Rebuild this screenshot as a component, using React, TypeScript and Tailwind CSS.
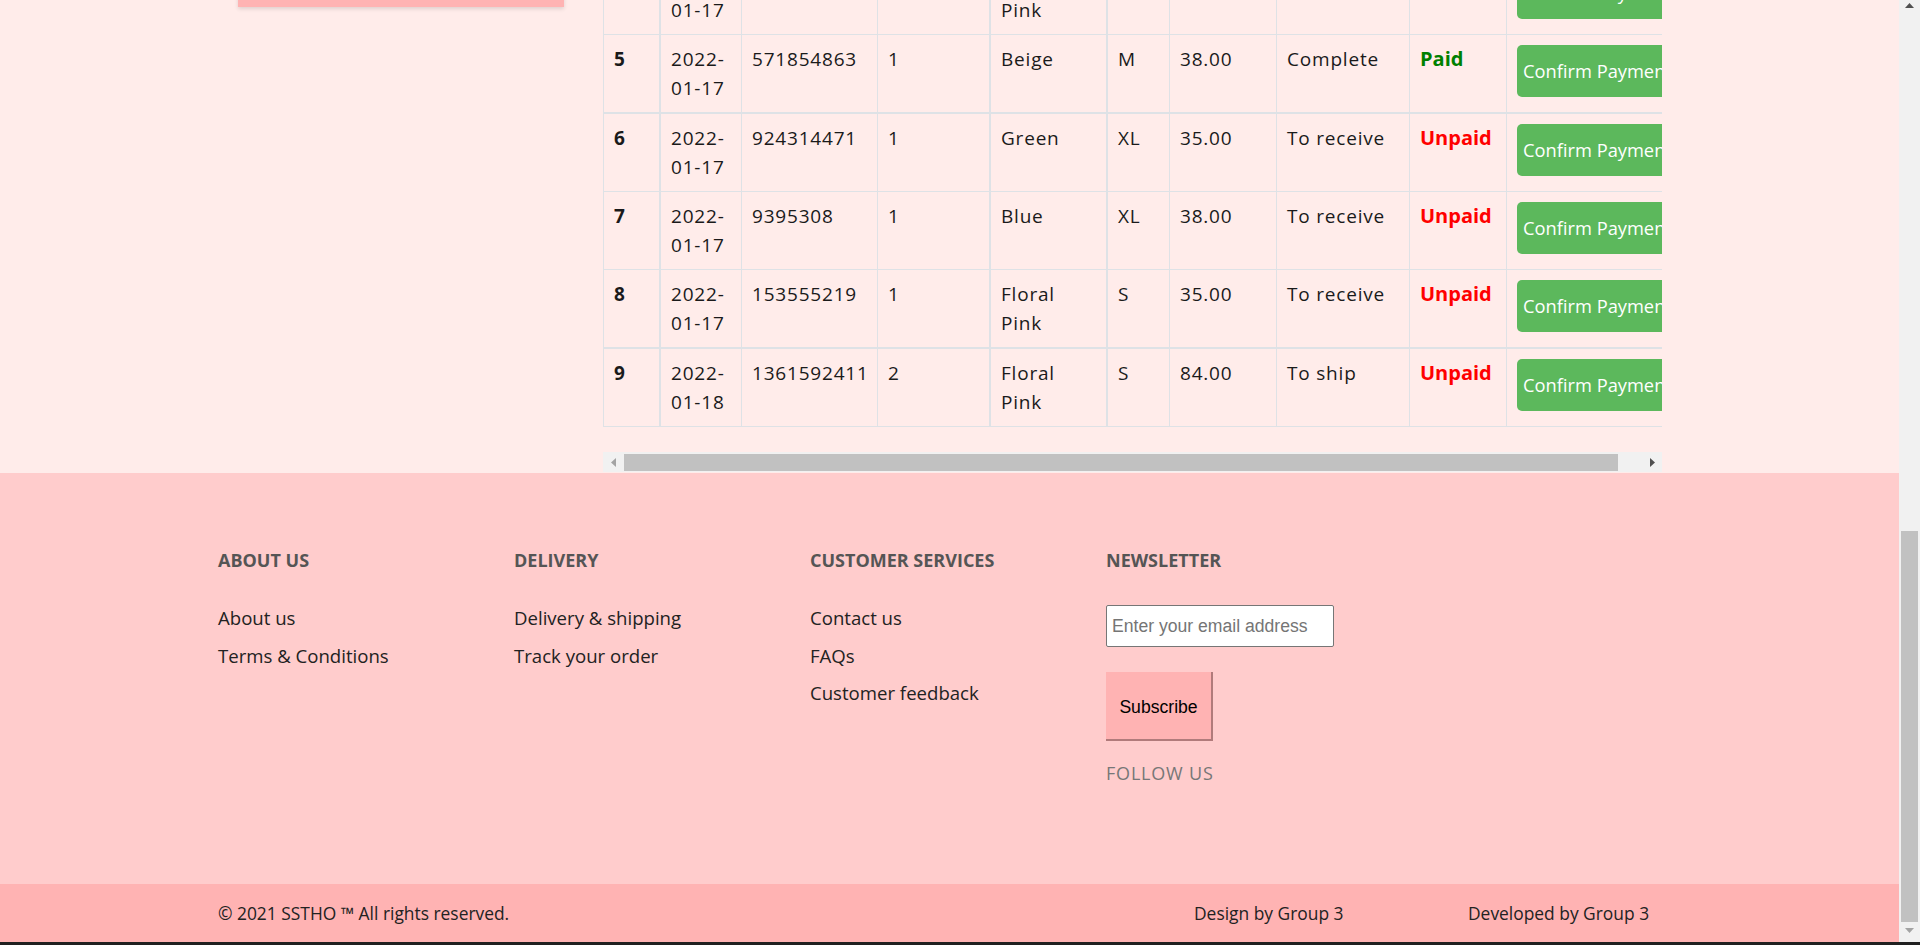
import React from "react";

type Order = {
  id: number;
  date: string;
  orderNo: string;
  qty: number;
  colour: string;
  size: string;
  total: string;
  status: string;
  paid: boolean;
  thick?: boolean;
};

const orders: Order[] = [
  { id: 1, date: "2022-01-16", orderNo: "1208447723", qty: 1, colour: "Beige", size: "S", total: "38.00", status: "Complete", paid: true },
  { id: 2, date: "2022-01-16", orderNo: "716529044", qty: 2, colour: "Blue", size: "M", total: "76.00", status: "Complete", paid: true },
  { id: 3, date: "2022-01-17", orderNo: "482615903", qty: 1, colour: "Green", size: "L", total: "35.00", status: "Complete", paid: true },
  { id: 4, date: "2022-01-17", orderNo: "330871562", qty: 1, colour: "Floral Pink", size: "M", total: "35.00", status: "Complete", paid: true },
  { id: 5, date: "2022-01-17", orderNo: "571854863", qty: 1, colour: "Beige", size: "M", total: "38.00", status: "Complete", paid: true },
  { id: 6, date: "2022-01-17", orderNo: "924314471", qty: 1, colour: "Green", size: "XL", total: "35.00", status: "To receive", paid: false, thick: true },
  { id: 7, date: "2022-01-17", orderNo: "9395308", qty: 1, colour: "Blue", size: "XL", total: "38.00", status: "To receive", paid: false },
  { id: 8, date: "2022-01-17", orderNo: "153555219", qty: 1, colour: "Floral Pink", size: "S", total: "35.00", status: "To receive", paid: false },
  { id: 9, date: "2022-01-18", orderNo: "1361592411", qty: 2, colour: "Floral Pink", size: "S", total: "84.00", status: "To ship", paid: false, thick: true },
];

const headers = ["#", "Date", "Order No.", "Quantity", "Colour", "Size", "Total", "Status", "Payment", "Action"];
const colWidths = [56, 82, 136, 112, 117, 63, 107, 133, 97, 187];
// columns that get the heavier rule on their left side
const thickCols = [1, 4, 5];

const sideMenu = ["My Profile", "My Orders", "Change Password", "Address Book", "Log Out"];

const cellClass = (col: number, thickRow: boolean, last: boolean) =>
  [
    "border-[#dee2e6] px-[10px] pt-[10px] pb-[10px] align-top",
    thickCols.includes(col) ? "border-l-2" : "border-l",
    thickRow ? "border-t-2" : "border-t",
    last ? "border-b" : "",
  ].join(" ");

const UpArrow = ({ color }: { color: string }) => (
  <svg width="9" height="5" viewBox="0 0 9 5">
    <path d="M4.5 0L9 5H0z" fill={color} />
  </svg>
);

const DownArrow = ({ color }: { color: string }) => (
  <svg width="9" height="5" viewBox="0 0 9 5">
    <path d="M0 0h9L4.5 5z" fill={color} />
  </svg>
);

const LeftArrow = ({ color }: { color: string }) => (
  <svg width="5" height="9" viewBox="0 0 5 9">
    <path d="M5 0v9L0 4.5z" fill={color} />
  </svg>
);

const RightArrow = ({ color }: { color: string }) => (
  <svg width="5" height="9" viewBox="0 0 5 9">
    <path d="M0 0l5 4.5L0 9z" fill={color} />
  </svg>
);

const OrdersTable = () => (
  <div className="w-[1059px] overflow-hidden pb-[25px]">
    <table className="w-[1090px] table-fixed border-separate border-spacing-0 text-[19px] leading-[28.5px] tracking-[0.8px] text-[#1a1a1a]">
      <colgroup>
        {colWidths.map((w, i) => (
          <col key={i} style={{ width: w }} />
        ))}
      </colgroup>
      <thead>
        <tr>
          {headers.map((h, i) => (
            <th key={h} className={cellClass(i, false, false) + " text-left font-bold whitespace-nowrap"}>
              {h}
            </th>
          ))}
        </tr>
      </thead>
      <tbody>
        {orders.map((o, idx) => {
          const last = idx === orders.length - 1;
          const t = !!o.thick;
          return (
            <tr key={o.id}>
              <th scope="row" className={cellClass(0, t, last) + " text-left font-bold"}>
                {o.id}
              </th>
              <td className={cellClass(1, t, last)}>{o.date}</td>
              <td className={cellClass(2, t, last)}>{o.orderNo}</td>
              <td className={cellClass(3, t, last)}>{o.qty}</td>
              <td className={cellClass(4, t, last)}>{o.colour}</td>
              <td className={cellClass(5, t, last)}>{o.size}</td>
              <td className={cellClass(6, t, last)}>{o.total}</td>
              <td className={cellClass(7, t, last)}>{o.status}</td>
              <td className={cellClass(8, t, last)}>
                {o.paid ? (
                  <span className="text-[20px] font-bold tracking-normal text-[#008000]">Paid</span>
                ) : (
                  <span className="text-[20px] font-bold tracking-normal text-[#ff0000]">Unpaid</span>
                )}
              </td>
              <td className={cellClass(9, t, last)}>
                <button className="whitespace-nowrap rounded-[5px] bg-[#5cb85c] px-[6px] py-[13px] text-[18.3px] leading-[26px] tracking-normal text-white">
                  Confirm Payment
                </button>
              </td>
            </tr>
          );
        })}
      </tbody>
    </table>
  </div>
);

const HScrollbar = () => (
  <div className="flex h-[20px] w-[1059px] bg-[#f1f1f1]">
    <div className="flex w-[20px] items-center justify-center">
      <LeftArrow color="#a3a3a3" />
    </div>
    <div className="mt-[2px] mb-[1px] ml-[1px] w-[994px] bg-[#c1c1c1]" />
    <div className="flex-1" />
    <div className="flex w-[20px] items-center justify-center">
      <RightArrow color="#505050" />
    </div>
  </div>
);

const VScrollbar = () => (
  <div className="flex w-[21px] shrink-0 flex-col bg-[#f1f1f1]">
    <div className="flex h-[17px] justify-center pt-[3px]">
      <UpArrow color="#505050" />
    </div>
    <div className="flex-1" />
    <div className="mx-[2px] h-[391px] bg-[#c1c1c1]" />
    <div className="flex h-[20px] justify-center pt-[6px]">
      <DownArrow color="#a3a3a3" />
    </div>
  </div>
);

const FooterColumn = ({ title, links }: { title: string; links: string[] }) => (
  <div className="w-[296px]">
    <h4 className="text-[18px] leading-[24px] font-bold text-[#555555]">{title}</h4>
    <ul className="mt-[32px] flex flex-col gap-[9.5px]">
      {links.map((l) => (
        <li key={l} className="text-[18.6px] leading-[28px] text-[#222222]">
          {l}
        </li>
      ))}
    </ul>
  </div>
);

export default function App() {
  return (
    <div className="flex h-[945px] flex-col overflow-hidden bg-[#202020] font-['Open_Sans','Noto_Sans',sans-serif]">
      <div className="flex min-h-0 flex-1">
        <div className="flex min-w-0 flex-1 flex-col justify-end overflow-hidden bg-[#ffecea]">
          <main className="flex shrink-0 items-start pt-[40px] pb-[1px] pl-[218px]">
            <aside className="w-[385px] shrink-0 pl-[20px]">
              <nav className="flex w-[326px] flex-col gap-[6px]">
                {sideMenu.map((m) => (
                  <div
                    key={m}
                    className="flex h-[62px] items-center justify-center bg-[#ffb3b3] text-[18px] text-[#222222] shadow-[0_2px_4px_rgba(0,0,0,0.12)]"
                  >
                    {m}
                  </div>
                ))}
              </nav>
            </aside>
            <section className="shrink-0">
              <OrdersTable />
              <HScrollbar />
            </section>
          </main>

          <footer className="shrink-0">
            <div className="flex h-[411px] bg-[#ffcccc] pt-[75px] pl-[218px]">
              <FooterColumn title="ABOUT US" links={["About us", "Terms & Conditions"]} />
              <FooterColumn title="DELIVERY" links={["Delivery & shipping", "Track your order"]} />
              <FooterColumn title="CUSTOMER SERVICES" links={["Contact us", "FAQs", "Customer feedback"]} />
              <div className="w-[296px]">
                <h4 className="text-[18px] leading-[24px] font-bold text-[#555555]">NEWSLETTER</h4>
                <input
                  type="email"
                  placeholder="Enter your email address"
                  className="mt-[33px] block h-[42px] w-[228px] rounded-[2px] border border-[#767676] bg-white px-[5px] font-['Liberation_Sans',Arial,sans-serif] text-[17.6px] placeholder:text-[#757575]"
                />
                <button className="mt-[25px] block h-[69px] w-[107px] border-r-2 border-b-2 border-[#b17b7b] bg-[#ffb3b3] pt-[4px] font-['Liberation_Sans',Arial,sans-serif] text-[17.6px] text-black">
                  Subscribe
                </button>
                <p className="mt-[20px] text-[18px] leading-[24px] tracking-[0.8px] text-[#777777]">FOLLOW US</p>
              </div>
            </div>
            <div className="flex h-[58px] items-center bg-[#ffb3b3] pl-[218px] text-[17.4px] text-[#222222]">
              <span className="w-[976px]">© 2021 SSTHO ™ All rights reserved.</span>
              <span className="w-[274px]">Design by Group 3</span>
              <span>Developed by Group 3</span>
            </div>
          </footer>
        </div>
        <VScrollbar />
      </div>
      <div className="h-[3px] shrink-0" />
    </div>
  );
}
